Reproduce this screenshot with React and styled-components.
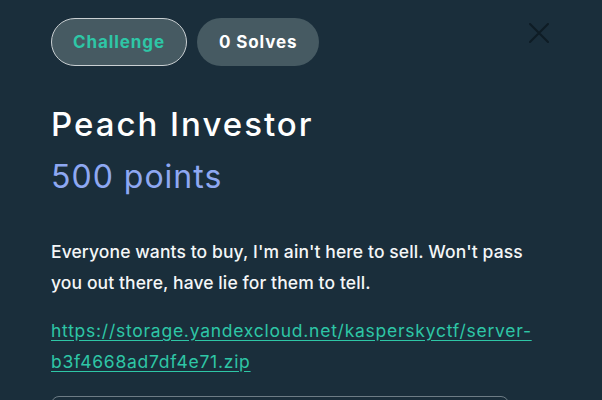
import React from "react";
import styled, { createGlobalStyle } from "styled-components";

const GlobalStyle = createGlobalStyle`
  html, body {
    margin: 0;
    padding: 0;
    background: #1a2e3b;
    overflow: hidden;
  }
  body {
    font-family: "Inter", "Noto Sans", sans-serif;
  }
`;

const Modal = styled.div`
  width: 602px;
  height: 400px;
  overflow: hidden;
  box-sizing: border-box;
  padding: 18px 51px 0 51px;
  background: #1a2e3b;
  color: #f4f6f7;
`;

const TopBar = styled.div`
  display: flex;
  align-items: flex-start;
  justify-content: space-between;
`;

const Pills = styled.div`
  display: flex;
  gap: 10px;
`;

const Pill = styled.div`
  height: 48px;
  box-sizing: border-box;
  padding: 0 21px;
  display: flex;
  align-items: center;
  border-radius: 24px;
  background: #465a62;
  border: 1px solid ${(p) => (p.active ? "#c9cfd2" : "transparent")};
  color: ${(p) => (p.active ? "#2ec6a6" : "#ffffff")};
  font-size: 17px;
  font-weight: 700;
  letter-spacing: 0.9px;
`;

const Close = styled.button`
  margin-top: 5px;
  margin-right: 2px;
  width: 20px;
  height: 20px;
  padding: 0;
  border: none;
  background: none;
  cursor: pointer;
  svg {
    display: block;
  }
`;

const Title = styled.h1`
  margin: 38px 0 0 0;
  font-size: 33px;
  line-height: 40px;
  font-weight: 500;
  letter-spacing: 2px;
  color: #ffffff;
`;

const Points = styled.div`
  margin-top: 13px;
  font-size: 32px;
  line-height: 40px;
  font-weight: 400;
  letter-spacing: 1px;
  color: #8ea8f2;
`;

const Description = styled.p`
  margin: 39px 0 0 0;
  width: 500px;
  font-size: 17.5px;
  line-height: 31px;
  font-weight: 500;
  letter-spacing: 0.1px;
  color: #f4f6f7;
`;

const FileLink = styled.a`
  display: block;
  margin-top: 17px;
  width: 500px;
  font-size: 17.5px;
  line-height: 31px;
  letter-spacing: 0.75px;
  color: #2ec6a6;
  text-decoration: underline;
  text-underline-offset: 3px;
`;

const FlagInput = styled.input`
  display: block;
  margin-top: 19px;
  width: 458px;
  height: 44px;
  box-sizing: border-box;
  border: 1px solid #6d7c85;
  border-radius: 8px;
  background: transparent;
`;

const App = () => {
  return (
    <>
      <GlobalStyle />
      <Modal>
        <TopBar>
          <Pills>
            <Pill active>Challenge</Pill>
            <Pill>0 Solves</Pill>
          </Pills>
          <Close aria-label="close">
            <svg width="20" height="20" viewBox="0 0 20 20">
              <path
                d="M1 1 L19 19 M19 1 L1 19"
                stroke="#0e1c25"
                strokeWidth="2"
                strokeLinecap="round"
              />
            </svg>
          </Close>
        </TopBar>
        <Title>Peach Investor</Title>
        <Points>500 points</Points>
        <Description>
          Everyone wants to buy, I'm ain't here to sell. Won't pass you out
          there, have lie for them to tell.
        </Description>
        <FileLink href="#">
          https://storage.yandexcloud.net/kasperskyctf/server-b3f4668ad7df4e71.zip
        </FileLink>
        <FlagInput />
      </Modal>
    </>
  );
};

export default App;
